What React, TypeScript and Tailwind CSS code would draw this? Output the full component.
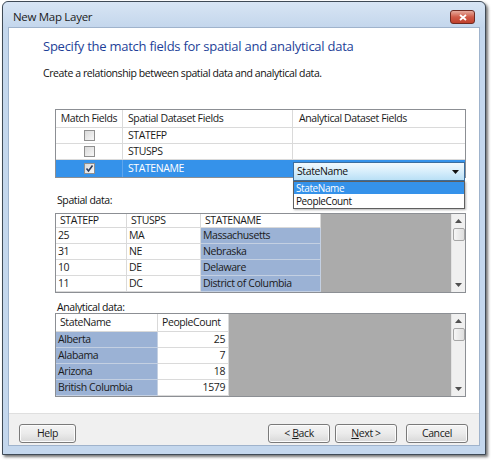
import React from 'react';

const UI = "font-['Open_Sans',sans-serif]";
const TXT = 'text-[10.5px] tracking-[-0.4px]';

const CheckBox = ({ checked }: { checked?: boolean }) => (
  <div className="w-[11px] h-[11px] border border-[#8f8f8f] bg-linear-to-br from-[#d9d9d9] to-[#f7f7f7] flex items-center justify-center">
    {checked && (
      <svg width="9" height="9" viewBox="0 0 9 9">
        <path d="M1.5 4.5 L3.5 7 L7.5 1.5" fill="none" stroke="#2a3b5c" strokeWidth="1.6" />
      </svg>
    )}
  </div>
);

const ScrollBar = () => (
  <div className="w-[14px] bg-[#f0f0f0] border-l border-[#e3e3e3] flex flex-col items-center">
    <div className="h-[14px] w-full flex items-center justify-center">
      <svg width="7" height="4" viewBox="0 0 7 4">
        <path d="M3.5 0 L7 4 L0 4 Z" fill="#505050" />
      </svg>
    </div>
    <div className="w-[12px] h-[13px] border border-[#a6a6a6] rounded-[2px] bg-linear-to-r from-[#f6f6f6] to-[#dedede]" />
    <div className="flex-1" />
    <div className="h-[14px] w-full flex items-center justify-center">
      <svg width="7" height="4" viewBox="0 0 7 4">
        <path d="M0 0 L7 0 L3.5 4 Z" fill="#505050" />
      </svg>
    </div>
  </div>
);

type GridProps = {
  widths: number[];
  headers: string[];
  rows: string[][];
  selCol: number;
  rightCols?: number[];
  headH: string;
};

const DataGrid = ({ widths, headers, rows, selCol, rightCols = [], headH }: GridProps) => (
  <div className="w-[411px] border border-[#8c8f94] flex bg-[#ababab]">
    <div className="flex flex-col bg-white">
      <div className={`flex ${headH} border-b border-[#d9d9d9]`}>
        {headers.map((h, i) => (
          <div key={h} style={{ width: widths[i] }} className={`border-r border-[#d9d9d9] pl-[4px] flex items-center text-[#1a1a1a] ${TXT}`}>
            {h}
          </div>
        ))}
      </div>
      {rows.map((r, ri) => (
        <div key={ri} className="flex h-[16px]">
          {r.map((c, i) => (
            <div
              key={i}
              style={{ width: widths[i] }}
              className={`border-r border-b flex items-center text-[#1a1a1a] ${TXT} ${
                i === selCol ? 'bg-[#9bb2d5] border-[#c4d0e2]' : 'border-[#dadada]'
              } ${rightCols.includes(i) ? 'justify-end pr-[3px]' : 'pl-[2px]'}`}
            >
              {c}
            </div>
          ))}
        </div>
      ))}
    </div>
    <div className="flex-1" />
    <ScrollBar />
  </div>
);

const Btn = ({ children, w }: { children: React.ReactNode; w: string }) => (
  <div className={`${w} h-[19px] border border-[#7a7a7a] rounded-[3px] bg-linear-to-b from-[#f4f4f4] via-[#ebebeb] to-[#d8d8d8] flex items-center justify-center text-[#1a1a1a] ${TXT} shadow-[inset_0_0_0_1px_#fcfcfc]`}>
    {children}
  </div>
);

export default function App() {
  return (
    <div className={`w-[491px] h-[463px] bg-white pt-[1px] pl-[2px] ${UI}`}>
      <div className="w-[484px] h-[454px] border border-[#3f4a56] rounded-t-[6px] bg-[#c4d7ed] shadow-[2px_2px_3px_rgba(0,0,0,0.55)] flex flex-col">
        {/* title bar */}
        <div className="h-[26px] rounded-t-[6px] bg-linear-to-b from-[#d8e5f4] to-[#c3d6ec] flex items-start justify-between pl-[10px] pr-[10px]">
          <span className="mt-[8px] text-[11.5px] tracking-[-0.3px] leading-[14px] text-[#1b1b1b]">New Map Layer</span>
          <div className="mt-[8px] w-[25px] h-[14px] rounded-[3px] border border-[#6e2a22] bg-linear-to-b from-[#e5a99d] via-[#cf5a48] to-[#c0402c] flex items-center justify-center">
            <svg width="8" height="7" viewBox="0 0 8 7">
              <path d="M1 1 L7 6 M7 1 L1 6" stroke="white" strokeWidth="1.8" />
            </svg>
          </div>
        </div>

        {/* client */}
        <div className="mx-[5px] h-[419px] flex flex-col border border-[#9fb3cc] -mt-[1px]">
          <div className="h-[385px] bg-white flex flex-col pl-[34px]">
            <div className="mt-[8px] text-[13px] tracking-[-0.25px] leading-[20px] text-[#1e3f98]">
              Specify the match fields for spatial and analytical data
            </div>
            <div className={`mt-[9px] leading-[16px] text-[#111] ${TXT}`}>
              Create a relationship between spatial data and analytical data.
            </div>

            {/* match fields table */}
            <div className={`ml-[12px] mt-[28px] w-[411px] border border-[#8c8f94] flex flex-col relative ${TXT}`}>
              <div className="flex h-[18px] border-b border-[#dadada] text-[#1a1a1a]">
                <div className="w-[67px] border-r border-[#dadada] flex items-center justify-center">Match Fields</div>
                <div className="w-[170px] border-r border-[#dadada] flex items-center pl-[5px]">Spatial Dataset Fields</div>
                <div className="flex-1 flex items-center pl-[6px]">Analytical Dataset Fields</div>
              </div>
              {['STATEFP', 'STUSPS'].map((f) => (
                <div key={f} className="flex h-[16px] border-b border-[#dadada] text-[#1a1a1a]">
                  <div className="w-[67px] border-r border-[#dadada] flex items-center justify-center">
                    <CheckBox />
                  </div>
                  <div className="w-[170px] border-r border-[#dadada] flex items-center pl-[5px]">{f}</div>
                  <div className="flex-1" />
                </div>
              ))}
              <div className="flex h-[17px] bg-[#3592ea] text-white">
                <div className="w-[67px] border-r border-[#5ea6ee] flex items-center justify-center">
                  <CheckBox checked />
                </div>
                <div className="w-[170px] flex items-center pl-[5px]">STATENAME</div>
                <div className="flex-1 relative">
                  <div className="absolute left-0 right-0 top-[2px] h-[19px] border border-[#3c6e9e] bg-linear-to-b from-[#f2f9fd] via-[#d7eefb] to-[#b9e0f6] flex items-center justify-between pl-[3px] pr-[5px] text-[#111] z-10">
                    <span>StateName</span>
                    <svg width="7" height="4" viewBox="0 0 7 4">
                      <path d="M0 0 L7 0 L3.5 4 Z" fill="#111" />
                    </svg>
                  </div>
                  <div className="absolute left-0 right-0 top-[21px] border border-[#5f5f5f] bg-white flex flex-col z-10 shadow-[1px_1px_2px_rgba(0,0,0,0.3)]">
                    <div className="bg-[#3592ea] text-white pl-[2px] h-[12px] leading-[12px] text-[10px]">StateName</div>
                    <div className="text-[#111] pl-[2px] h-[13px] leading-[13px] text-[10px] mt-[1px]">PeopleCount</div>
                  </div>
                </div>
              </div>
            </div>

            <div className={`ml-[14px] mt-[15px] leading-[14px] text-[#111] ${TXT}`}>Spatial data:</div>
            <div className="ml-[12px] mt-[6px]">
              <DataGrid
                widths={[71, 74, 120]}
                headers={['STATEFP', 'STUSPS', 'STATENAME']}
                rows={[
                  ['25', 'MA', 'Massachusetts'],
                  ['31', 'NE', 'Nebraska'],
                  ['10', 'DE', 'Delaware'],
                  ['11', 'DC', 'District of Columbia'],
                ]}
                selCol={2}
                headH="h-[14px]"
              />
            </div>

            <div className={`ml-[14px] mt-[8px] leading-[12px] text-[#111] ${TXT}`}>Analytical data:</div>
            <div className="ml-[12px]">
              <DataGrid
                widths={[102, 71]}
                headers={['StateName', 'PeopleCount']}
                rows={[
                  ['Alberta', '25'],
                  ['Alabama', '7'],
                  ['Arizona', '18'],
                  ['British Columbia', '1579'],
                ]}
                selCol={0}
                rightCols={[1]}
                headH="h-[18px]"
              />
            </div>
          </div>

          {/* footer */}
          <div className="flex-1 bg-[#f0f0f0] border-t border-[#dfdfdf] flex items-start pt-[10px] pl-[10px] pr-[11px]">
            <Btn w="w-[57px]">Help</Btn>
            <div className="flex-1" />
            <Btn w="w-[62px]">
              &lt;&nbsp;<span className="underline">B</span>ack
            </Btn>
            <div className="w-[5px]" />
            <Btn w="w-[62px]">
              <span className="underline">N</span>ext &gt;
            </Btn>
            <div className="w-[9px]" />
            <Btn w="w-[62px]">Cancel</Btn>
          </div>
        </div>
      </div>
    </div>
  );
}
